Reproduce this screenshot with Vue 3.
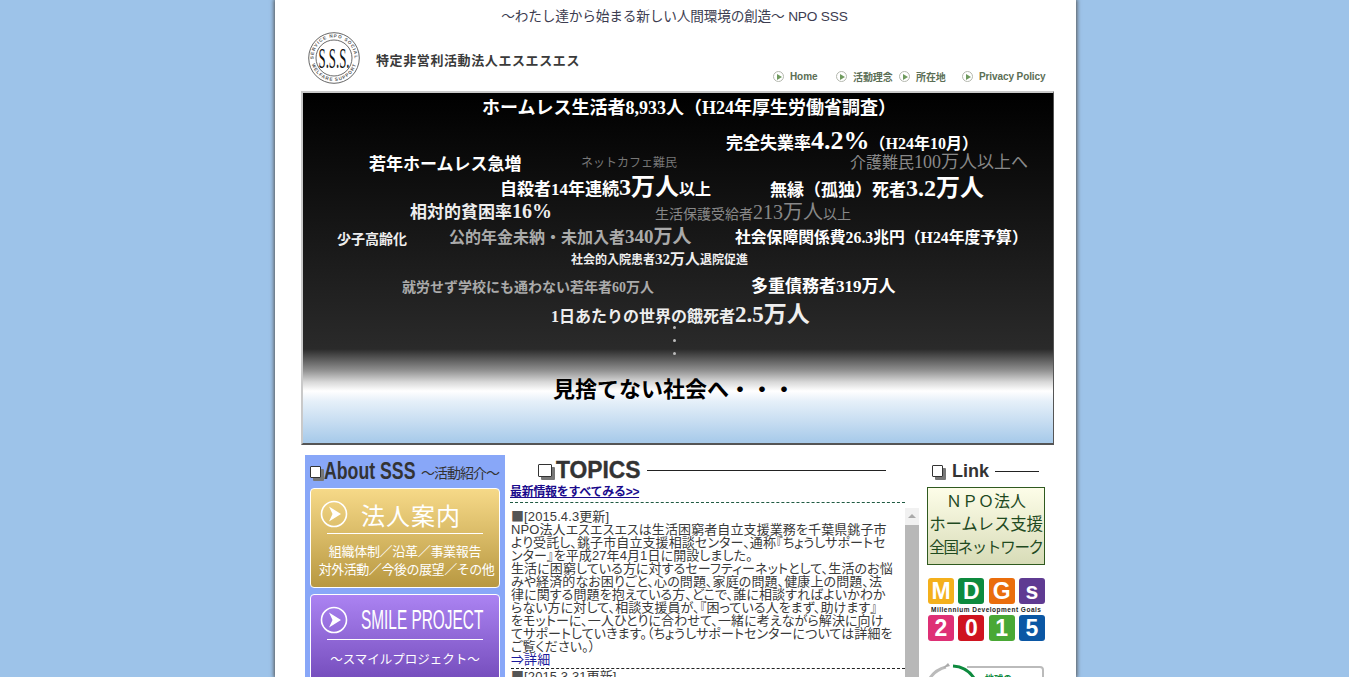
<script setup>
// Landing page of NPO SSS: header, statistics banner and the three columns below it.
const navItems = [
  { label: 'Home', width: 63 },
  { label: '活動理念', width: 63 },
  { label: '所在地', width: 63 },
  { label: 'Privacy Policy', width: 82 },
]

// x, y = left edge and top edge inside the banner
const heroLines = [
  { x: 179, y: 4, size: 18, color: '#fff', parts: [['ホームレス生活者8,933人（H24年厚生労働省調査）']] },
  { x: 423, y: 31, size: 17, color: '#fff', parts: [['完全失業率'], ['4.2%', 26], ['（H24年10月）', 16]] },
  { x: 66, y: 61, size: 17, color: '#fff', parts: [['若年ホームレス急増']] },
  { x: 278, y: 63, size: 12, color: '#777', weight: 400, parts: [['ネットカフェ難民']] },
  { x: 547, y: 58, size: 16, color: '#888', weight: 400, parts: [['介護難民'], ['100万人', 18], ['以上へ', 17]] },
  { x: 197, y: 79, size: 17, color: '#fff', parts: [['自殺者14年連続'], ['3万人', 24], ['以上', 16]] },
  { x: 467, y: 80, size: 17, color: '#fff', parts: [['無縁（孤独）死者'], ['3.2万人', 24]] },
  { x: 107, y: 105, size: 17, color: '#eee', parts: [['相対的貧困率'], ['16%', 20]] },
  { x: 352, y: 106, size: 14, color: '#888', weight: 400, parts: [['生活保護受給者'], ['213万人', 20], ['以上', 14]] },
  { x: 34, y: 138, size: 14, color: '#eee', parts: [['少子高齢化']] },
  { x: 146, y: 132, size: 16, color: '#aaa', parts: [['公的年金未納・未加入者'], ['340万人', 19]] },
  { x: 432, y: 135, size: 15.8, color: '#fff', parts: [['社会保障関係費26.3兆円（H24年度予算）']] },
  { x: 268, y: 157, size: 12, color: '#eee', parts: [['社会的入院患者'], ['32万人', 15], ['退院促進', 12]] },
  { x: 99, y: 186, size: 14, color: '#aaa', parts: [['就労せず学校にも通わない若年者60万人']] },
  { x: 448, y: 183, size: 17, color: '#fff', parts: [['多重債務者319万人']] },
  { x: 248, y: 207, size: 16, color: '#eee', parts: [['1日あたりの世界の餓死者'], ['2.5万人', 23]] },
  { x: 250, y: 283, size: 22, color: '#000', parts: [['見捨てない社会へ・・・']] },
]

const topics = [
  {
    date: '[2015.4.3更新]',
    lines: [
      'NPO法人エスエスエスは生活困窮者自立支援業務を千葉県銚子市',
      'より受託し、銚子市自立支援相談センター、通称『ちょうしサポートセ',
      'ンター』を平成27年4月1日に開設しました。',
      '生活に困窮している方に対するセーフティーネットとして、生活のお悩',
      'みや経済的なお困りごと、心の問題、家庭の問題、健康上の問題、法',
      '律に関する問題を抱えている方、どこで、誰に相談すればよいかわか',
      'らない方に対して、相談支援員が、『困っている人をまず、助けます』',
      'をモットーに、一人ひとりに合わせて、一緒に考えながら解決に向け',
      'てサポートしていきます。（ちょうしサポートセンターについては詳細を',
      'ご覧ください。）',
    ],
    more: true,
  },
  { date: '[2015.3.31更新]', lines: [], more: false },
]

const mdgsTop = [
  { ch: 'M', bg: '#f4b01c' },
  { ch: 'D', bg: '#0d8a3e' },
  { ch: 'G', bg: '#ea6d0c' },
  { ch: 's', bg: '#5f3b92' },
]
const mdgsBottom = [
  { ch: '2', bg: '#de3075' },
  { ch: '0', bg: '#cf1420' },
  { ch: '1', bg: '#49a835' },
  { ch: '5', bg: '#0b57a4' },
]
</script>

<template>
  <div class="page">
    <div class="sheet">
      <p class="tagline">～わたし達から始まる新しい人間環境の創造～ NPO SSS</p>

      <header class="head">
        <div class="brand">
          <svg class="seal" width="52" height="52" viewBox="0 0 52 52">
            <defs>
              <path id="ring-top" d="M5.5 26 A20.5 20.5 0 0 1 46.5 26" />
              <path id="ring-bottom" d="M3 26 A23 23 0 0 0 49 26" />
            </defs>
            <circle cx="26" cy="26" r="25.3" fill="#fff" stroke="#666" stroke-width="1" />
            <circle cx="26" cy="26" r="18" fill="#fff" stroke="#444" stroke-width=".8" />
            <text class="ring-text"><textPath href="#ring-top" startOffset="50%" text-anchor="middle">SERVICE NPO SOCIAL</textPath></text>
            <text class="ring-text"><textPath href="#ring-bottom" startOffset="50%" text-anchor="middle">WELFARE SUPPORT</textPath></text>
            <text x="26" y="36" text-anchor="middle" class="seal-text" textLength="31" lengthAdjust="spacingAndGlyphs">S.S.S.</text>
          </svg>
          <span class="brand-name">特定非営利活動法人エスエスエス</span>
        </div>
        <nav class="nav">
          <a v-for="item in navItems" :key="item.label" class="nav-item" :style="{ width: item.width + 'px' }">
            <span class="nav-dot"><i></i></span>{{ item.label }}
          </a>
        </nav>
      </header>

      <section class="hero">
        <div
          v-for="(line, i) in heroLines"
          :key="i"
          class="hero-line"
          :style="{ left: line.x + 'px', top: line.y + 'px', fontSize: line.size + 'px', color: line.color, fontWeight: line.weight || 700 }"
        >
          <span v-for="(p, j) in line.parts" :key="j" :style="p[1] ? { fontSize: p[1] + 'px' } : null">{{ p[0] }}</span>
        </div>
        <div class="hero-dots"><i></i><i></i><i></i></div>
      </section>

      <div class="cols">
        <aside class="about">
          <h2 class="about-title"><span class="square"></span><b>About SSS</b><small>～活動紹介～</small></h2>
          <a class="promo gold">
            <span class="promo-head">
              <svg width="28" height="28" viewBox="0 0 28 28">
                <circle cx="14" cy="14" r="12.5" fill="none" stroke="#fff" stroke-width="1.6" />
                <path d="M9 6.5 L21 14 L9 21.5 L12.5 14 Z" fill="#fff" />
              </svg>
              <span class="promo-title">法人案内</span>
            </span>
            <span class="promo-rule"></span>
            <span class="promo-sub">組織体制／沿革／事業報告</span>
            <span class="promo-sub tight">対外活動／今後の展望／その他</span>
          </a>
          <a class="promo violet">
            <span class="promo-head">
              <svg width="28" height="28" viewBox="0 0 28 28">
                <circle cx="14" cy="14" r="12.5" fill="none" stroke="#fff" stroke-width="1.6" />
                <path d="M9 6.5 L21 14 L9 21.5 L12.5 14 Z" fill="#fff" />
              </svg>
              <span class="promo-title latin">SMILE PROJECT</span>
            </span>
            <span class="promo-rule"></span>
            <span class="promo-sub wide">～スマイルプロジェクト～</span>
          </a>
        </aside>

        <main class="topics">
          <h2 class="topics-title"><span class="square big"></span><b>TOPICS</b><span class="title-rule"></span></h2>
          <a class="all-link">最新情報をすべてみる&gt;&gt;</a>
          <div class="scroller">
            <div class="feed">
              <article v-for="t in topics" :key="t.date" class="topic">
                <div><span class="mark">■</span>{{ t.date }}</div>
                <div v-for="(l, i) in t.lines" :key="i">{{ l }}</div>
                <a v-if="t.more" class="more">⇒詳細</a>
              </article>
            </div>
            <div class="scrollbar">
              <span class="arrow"></span>
              <span class="thumb"></span>
            </div>
          </div>
        </main>

        <aside class="links">
          <h2 class="link-title"><span class="square"></span><b>Link</b><span class="title-rule"></span></h2>
          <a class="npo-box">
            <span class="npo-1">ＮＰＯ法人</span>
            <span class="npo-2">ホームレス支援</span>
            <span class="npo-3">全国ネットワーク</span>
          </a>
          <div class="mdgs">
            <div class="mdgs-row">
              <span v-for="c in mdgsTop" :key="c.ch" class="tile" :style="{ background: c.bg }">{{ c.ch }}</span>
            </div>
            <div class="mdgs-caption">Millennium Development Goals</div>
            <div class="mdgs-row">
              <span v-for="c in mdgsBottom" :key="c.ch" class="tile" :style="{ background: c.bg }">{{ c.ch }}</span>
            </div>
          </div>
          <div class="third">
            <svg width="118" height="20" viewBox="0 0 118 20">
              <path d="M3 18 A27 27 0 0 1 19 7" fill="none" stroke="#bbb" stroke-width="3" />
              <path d="M16 8 L21 3 L23 6 Z" fill="#aaa" />
              <path d="M26 6 A27 27 0 0 1 47 18" fill="none" stroke="#0d8a3e" stroke-width="3" />
              <path d="M40 7 H113 Q116 7 116 10 V20" fill="none" stroke="#bbb" stroke-width="2" />
              <text x="58" y="22" class="third-text">地球の</text>
            </svg>
          </div>
        </aside>
      </div>
    </div>
  </div>
</template>

<style>
html, body {
  margin: 0;
  height: 677px;
  overflow: hidden;
  background: #9dc3e9;
}
</style>

<style scoped>
.page {
  display: flex;
  justify-content: center;
  height: 677px;
  overflow: hidden;
  padding-left: 2px;
  font-family: "Liberation Sans", "Noto Sans CJK JP", sans-serif;
}
.sheet {
  width: 801px;
  height: 677px;
  background: #fff;
  box-shadow: 0 0 4px 1px #555;
  box-sizing: border-box;
  padding: 0 22px 0 25px;
  overflow: hidden;
  flex: none;
}
.tagline {
  margin: 0;
  padding: 8px 5px 0 0;
  text-align: center;
  font-size: 13.7px;
  line-height: 18px;
  color: #3c3c50;
  letter-spacing: -0.2px;
}
.head {
  display: flex;
  justify-content: space-between;
  align-items: flex-end;
  height: 65px;
}
.brand {
  display: flex;
  align-items: center;
  gap: 16px;
  padding: 0 0 7px 8px;
}
.ring-text {
  font-family: "Liberation Sans", sans-serif;
  font-size: 4.6px;
  font-weight: 700;
  letter-spacing: .9px;
  fill: #555;
}
.seal-text {
  font-family: "Liberation Serif", serif;
  font-size: 30px;
  fill: #111;
}
.brand-name {
  font-size: 13px;
  font-weight: 700;
  color: #3a3a3a;
  letter-spacing: 0.6px;
  margin-top: 2px;
}
.nav {
  display: flex;
  padding: 0 10px 7px 0;
}
.nav-item {
  display: flex;
  align-items: center;
  gap: 6px;
  font-size: 10px;
  font-weight: 700;
  color: #5b6e55;
  white-space: nowrap;
  letter-spacing: -0.1px;
}
.nav-dot {
  width: 11px;
  height: 11px;
  flex: none;
  box-sizing: border-box;
  border: 1px solid #b4b8ae;
  border-radius: 50%;
  display: flex;
  align-items: center;
  justify-content: center;
}
.nav-dot i {
  border-left: 5px solid #6f9a5e;
  border-top: 3px solid transparent;
  border-bottom: 3px solid transparent;
  margin-left: 1px;
}
.hero {
  position: relative;
  width: 753px;
  height: 354px;
  margin-left: 1px;
  box-sizing: border-box;
  border: 2px solid #c9c9c9;
  border-right: 1px solid #555;
  border-bottom-color: #555;
  overflow: hidden;
  font-family: "Liberation Serif", "Noto Sans CJK JP", serif;
  background: linear-gradient(180deg,
    #000 0, #2a2a2a 256px,
    #8e8e8e 277px, #d8d8d8 289px, #fff 298px, #e6f0f9 308px, #a9cbea 348px);
}
.hero-line {
  position: absolute;
  white-space: nowrap;
  line-height: 1.3;
}
.hero-dots {
  position: absolute;
  left: 370px;
  top: 233px;
  display: flex;
  flex-direction: column;
  gap: 10px;
}
.hero-dots i {
  width: 3px;
  height: 3px;
  border-radius: 50%;
  background: #bbb;
}
.cols {
  display: flex;
  margin-top: 10px;
}
.about {
  width: 200px;
  margin-left: 5px;
  padding: 0 5px;
  box-sizing: border-box;
  background: #88a7f8;
  flex: none;
}
.about-title {
  display: flex;
  align-items: center;
  margin: 0 0 2px;
  height: 31px;
  padding-top: 2px;
  box-sizing: border-box;
  font-size: 23px;
  color: #333;
  white-space: nowrap;
}
.about-title b {
  margin-left: 3px;
  transform: scaleX(.77);
  transform-origin: left;
  width: 93px;
}
.about-title small {
  margin-left: 4px;
  font-size: 14px;
  font-weight: 400;
  letter-spacing: -1px;
}
.square {
  width: 9px;
  height: 10px;
  flex: none;
  background: #fff;
  border: 1px solid #333;
  border-radius: 1px;
  box-shadow: 3px 3px 0 #777;
}
.square.big {
  width: 12px;
  height: 11px;
}
.promo {
  display: flex;
  flex-direction: column;
  align-items: center;
  width: 190px;
  box-sizing: border-box;
  border: 1px solid #fff;
  border-radius: 4px;
  color: #fff;
  margin-bottom: 6px;
}
.gold {
  height: 100px;
  background: linear-gradient(180deg, #f6d988, #b89841);
}
.violet {
  height: 100px;
  background: linear-gradient(180deg, #ab83f2, #6d45b4);
}
.promo-head {
  display: flex;
  align-items: center;
  align-self: flex-start;
  gap: 13px;
  height: 38px;
  margin: 6px 0 0 9px;
}
.promo-title {
  font-size: 24px;
  letter-spacing: 1px;
  white-space: nowrap;
}
.promo-title.latin {
  font-size: 27px;
  letter-spacing: 0;
  transform: scaleX(.57);
  transform-origin: left;
}
.promo-rule {
  width: 156px;
  height: 1px;
  background: #fff;
  margin: 0 0 9px;
}
.promo-sub {
  font-size: 13px;
  line-height: 18px;
  white-space: nowrap;
  letter-spacing: -0.3px;
}
.promo-sub.tight {
  letter-spacing: -0.45px;
  margin-left: 3px;
}
.promo-sub.wide {
  font-size: 12.5px;
  letter-spacing: 0;
  margin-top: 2px;
}
.topics {
  width: 409px;
  margin-left: 5px;
  flex: none;
}
.topics-title {
  display: flex;
  align-items: center;
  margin: 0;
  height: 30px;
  padding-left: 28px;
  color: #333;
}
.topics-title b {
  font-size: 24px;
  margin-left: 4px;
  transform: scaleX(.95);
  transform-origin: left;
  width: 87px;
  -webkit-text-stroke: .4px #333;
}
.title-rule {
  display: block;
  height: 1px;
  background: #222;
  flex: none;
  width: 239px;
  margin-left: 4px;
}
.all-link {
  display: block;
  width: 395px;
  font-size: 12px;
  line-height: 14px;
  font-weight: 700;
  color: #1a0a8c;
  text-decoration: underline;
  border-bottom: 1px dashed #1f5a42;
  padding-bottom: 3px;
  letter-spacing: -0.3px;
}
.scroller {
  display: flex;
  height: 170px;
  overflow: hidden;
  margin-top: 5px;
}
.feed {
  width: 395px;
  flex: none;
  padding-left: 1px;
  box-sizing: border-box;
  background: #fff;
}
.topic {
  font-size: 13px;
  font-feature-settings: "palt";
  line-height: 13px;
  letter-spacing: 0.1px;
  color: #3a3a3a;
  border-bottom: 1px dashed #222;
  padding-bottom: 2px;
  white-space: nowrap;
}
.topic:first-child {
  padding-top: 1px;
}
.topic:last-child {
  border-bottom: 0;
}
.mark {
  font-family: "Noto Sans CJK JP", sans-serif;
  color: #555;
}
.more {
  display: block;
  color: #1a1a9c;
}
.scrollbar {
  width: 14px;
  flex: none;
  background: #f1f1f1;
  display: flex;
  flex-direction: column;
  align-items: center;
}
.arrow {
  margin-top: 6px;
  border-left: 4px solid transparent;
  border-right: 4px solid transparent;
  border-bottom: 4px solid #aaa;
}
.thumb {
  margin-top: 7px;
  width: 100%;
  flex: 1;
  background: #b8b8b8;
}
.links {
  width: 118px;
  margin-left: 8px;
  flex: none;
  display: flex;
  flex-direction: column;
}
.link-title {
  display: flex;
  align-items: center;
  margin: 0;
  height: 32px;
  color: #333;
  padding-left: 5px;
  box-sizing: border-box;
}
.link-title b {
  font-size: 18px;
  margin-left: 9px;
}
.link-title .title-rule {
  width: 44px;
  margin-left: 6px;
}
.npo-box {
  display: flex;
  flex-direction: column;
  align-items: center;
  height: 78px;
  box-sizing: border-box;
  border: 1px solid #2f5a1f;
  background: linear-gradient(180deg, #fdfde8, #d8dcb8);
  color: #1f4a1f;
  white-space: nowrap;
}
.npo-1 {
  font-size: 16px;
  line-height: 23px;
  margin-top: 2px;
}
.npo-2 {
  font-size: 16.5px;
  line-height: 23px;
  letter-spacing: -0.2px;
}
.npo-3 {
  font-size: 15.5px;
  line-height: 23px;
  letter-spacing: -1.3px;
}
.mdgs {
  margin: 13px 0 0 1px;
}
.mdgs-row {
  display: flex;
  justify-content: space-between;
}
.tile {
  width: 26px;
  height: 26px;
  border-radius: 3px;
  color: #fff;
  font-size: 23px;
  line-height: 26px;
  font-weight: 700;
  text-align: center;
}
.mdgs-caption {
  font-size: 6.5px;
  font-weight: 700;
  line-height: 11px;
  letter-spacing: 0.5px;
  padding-left: 3px;
  color: #222;
  white-space: nowrap;
  overflow: hidden;
}
.third {
  margin-top: 19px;
  height: 20px;
}
.third svg {
  display: block;
}
.third-text {
  font-size: 9px;
  font-weight: 700;
  fill: #0d8a3e;
}
</style>
